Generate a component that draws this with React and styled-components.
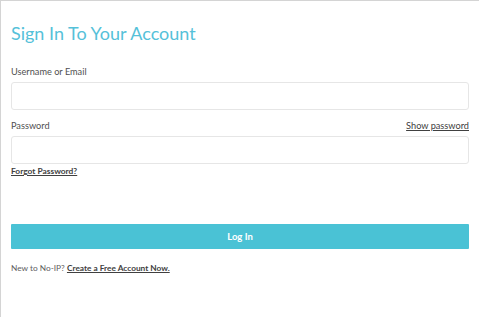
import React from "react";
import styled, { createGlobalStyle } from "styled-components";

const GlobalStyle = createGlobalStyle`
  html, body {
    margin: 0;
    padding: 0;
    background: #fff;
  }
  body {
    font-family: Lato, "Noto Sans", sans-serif;
  }
`;

const Panel = styled.div`
  box-sizing: border-box;
  width: 479px;
  height: 317px;
  border-top: 1px solid #d4d4d4;
  border-left: 1px solid #d4d4d4;
  padding: 21px 10px 0 10px;
`;

const Title = styled.h1`
  margin: 0 0 21px 0;
  font-size: 18px;
  font-weight: 400;
  color: #55c1d9;
  line-height: 22px;
`;

const Field = styled.div`
  display: flex;
  flex-direction: column;
  margin-bottom: ${(p) => p.$gap || "9px"};
`;

const LabelRow = styled.div`
  display: flex;
  justify-content: space-between;
  align-items: baseline;
  margin-bottom: 3px;
`;

const Label = styled.label`
  font-size: 9.2px;
  color: #505050;
  line-height: 14px;
`;

const Link = styled.a`
  font-size: ${(p) => p.$size || "9.2px"};
  font-weight: ${(p) => (p.$bold ? 700 : 400)};
  color: #404040;
  text-decoration: underline;
  cursor: pointer;
  line-height: 13px;
`;

const Input = styled.input`
  box-sizing: border-box;
  width: 100%;
  height: 28px;
  border: 1px solid #e6e6e6;
  border-radius: 3px;
  padding: 0 8px;
  outline: none;
  font-family: inherit;
`;

const Below = styled.div`
  margin-top: 1px;
  font-size: 8.4px;
  line-height: 13px;
`;

const Button = styled.button`
  display: block;
  box-sizing: border-box;
  width: 100%;
  height: 25px;
  border: none;
  border-radius: 1px;
  background: #4ac2d5;
  color: #fff;
  font-family: inherit;
  font-size: 9.5px;
  font-weight: 700;
  margin-top: 46px;
  cursor: pointer;
`;

const Footer = styled.p`
  margin: 13px 0 0 0;
  font-size: 8.3px;
  color: #606060;
  line-height: 13px;
`;

export default function App() {
  return (
    <>
      <GlobalStyle />
      <Panel>
        <Title>Sign In To Your Account</Title>
        <Field>
          <LabelRow>
            <Label>Username or Email</Label>
          </LabelRow>
          <Input type="text" />
        </Field>
        <Field $gap="0">
          <LabelRow>
            <Label>Password</Label>
            <Link>Show password</Link>
          </LabelRow>
          <Input type="password" />
          <Below>
            <Link $bold $size="8.4px">Forgot Password?</Link>
          </Below>
        </Field>
        <Button>Log In</Button>
        <Footer>
          New to No-IP? <Link $bold $size="8.3px">Create a Free Account Now.</Link>
        </Footer>
      </Panel>
    </>
  );
}
